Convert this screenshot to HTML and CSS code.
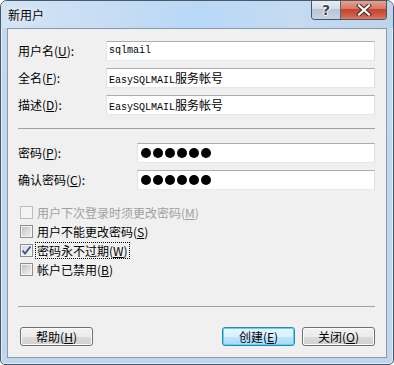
FILE: index.html
```html
<!DOCTYPE html>
<html>
<head>
<meta charset="utf-8">
<link rel="stylesheet" href="styles.css">
</head>
<body>
<div class="window">
  <div class="titlebar">
    <span class="title">新用户</span>
    <div class="caption-btns">
      <div class="cap cap-help"><span class="qmark">?</span></div>
      <div class="cap cap-close">
        <svg width="16" height="12" viewBox="0 0 16 12">
          <path d="M3 1.5 L13 10.5 M13 1.5 L3 10.5" stroke="#4a2a25" stroke-width="4.2" stroke-linecap="square" fill="none"/>
          <path d="M3 1.5 L13 10.5 M13 1.5 L3 10.5" stroke="#ffffff" stroke-width="2.2" stroke-linecap="square" fill="none"/>
        </svg>
      </div>
    </div>
  </div>
  <div class="client">
    <div class="fields">
      <div class="row">
        <label class="lbl">用户名(<u>U</u>):</label>
        <div class="edit">sqlmail</div>
      </div>
      <div class="row">
        <label class="lbl">全名(<u>F</u>):</label>
        <div class="edit">EasySQLMAIL<span class="cjk">服务帐号</span></div>
      </div>
      <div class="row">
        <label class="lbl">描述(<u>D</u>):</label>
        <div class="edit">EasySQLMAIL<span class="cjk">服务帐号</span></div>
      </div>
    </div>
    <div class="sep"></div>
    <div class="fields pw">
      <div class="row">
        <label class="lbl">密码(<u>P</u>):</label>
        <div class="edit dots"><span class="dot"></span><span class="dot"></span><span class="dot"></span><span class="dot"></span><span class="dot"></span><span class="dot"></span></div>
      </div>
      <div class="row">
        <label class="lbl">确认密码(<u>C</u>):</label>
        <div class="edit dots"><span class="dot"></span><span class="dot"></span><span class="dot"></span><span class="dot"></span><span class="dot"></span><span class="dot"></span></div>
      </div>
    </div>
    <div class="checks">
      <div class="check disabled"><span class="box"></span><span class="ctext">用户下次登录时须更改密码(<u>M</u>)</span></div>
      <div class="check"><span class="box"></span><span class="ctext">用户不能更改密码(<u>S</u>)</span></div>
      <div class="check"><span class="box checked"><svg width="11" height="11" viewBox="0 0 11 11"><path d="M1.5 5.5 L4 8.5 L9.5 1.5" stroke="#3b5494" stroke-width="1.8" fill="none"/></svg></span><span class="ctext focus">密码永不过期(<u>W</u>)</span></div>
      <div class="check"><span class="box"></span><span class="ctext">帐户已禁用(<u>B</u>)</span></div>
    </div>
    <div class="sep sep2"></div>
    <div class="buttons">
      <div class="btn">帮助(<u>H</u>)</div>
      <div class="spacer"></div>
      <div class="btn default">创建(<u>E</u>)</div>
      <div class="btn">关闭(<u>O</u>)</div>
    </div>
  </div>
</div>
</body>
</html>
```

FILE: styles.css
```css
html, body {
  margin: 0;
  padding: 0;
  background: #ffffff;
}
body {
  font-family: "Noto Sans CJK SC", "Liberation Sans", sans-serif;
  font-size: 12px;
  color: #000;
}
u {
  text-decoration: underline;
  text-underline-offset: 1px;
}
.window {
  box-sizing: border-box;
  width: 394px;
  height: 365px;
  border: 1px solid #4d5866;
  border-radius: 7px 7px 5px 5px;
  background: linear-gradient(to bottom, #c9def3 0px, #c3d9f0 30px, #bfd6ee 100%);
  box-shadow: inset 0 0 0 1px rgba(255,255,255,0.55);
  display: flex;
  flex-direction: column;
  overflow: hidden;
}
.titlebar {
  height: 27px;
  display: flex;
  align-items: flex-start;
  background: linear-gradient(to right, #d3e4f5 0%, #c4dcf4 30%, #b8d8f7 50%, #c4dbf1 75%, #bdd3ea 100%);
  flex-shrink: 0;
}
.title {
  margin-left: 7px;
  margin-top: 6px;
  line-height: 16px;
  font-size: 12px;
  color: #000;
  text-shadow: 0 0 6px rgba(255,255,255,0.9);
}
.caption-btns {
  margin-left: auto;
  margin-right: 6px;
  margin-top: -1px;
  display: flex;
  height: 20px;
  border: 1px solid #4a5462;
  border-top: none;
  border-radius: 0 0 4px 4px;
  overflow: hidden;
  box-sizing: border-box;
}
.cap {
  height: 19px;
  display: flex;
  align-items: center;
  justify-content: center;
}
.cap-help {
  width: 28px;
  background: linear-gradient(to bottom, #e9eff6 0%, #d3dde9 45%, #b7c5d6 50%, #c6d3e2 100%);
  border-right: 1px solid #5a6572;
}
.qmark {
  font-family: "DejaVu Sans", sans-serif;
  font-weight: bold;
  font-size: 14px;
  line-height: 14px;
  color: #3d4654;
  text-shadow: 1px 0 0 #fff, -1px 0 0 #fff, 0 1px 0 #fff, 0 -1px 0 #fff;
}
.cap-close {
  width: 45px;
  background: linear-gradient(to bottom, #e7a797 0%, #d77a66 45%, #c6432f 50%, #d1604a 85%, #e0806a 100%);
}
.client {
  box-sizing: border-box;
  margin: 0 6px 6px 6px;
  height: 330px;
  border: 1px solid #8799ad;
  background: #f0f0f0;
  padding: 12px 11px 0 10px;
  display: flex;
  flex-direction: column;
}
.fields {
  display: flex;
  flex-direction: column;
  gap: 7px;
}
.row {
  display: flex;
  align-items: center;
  height: 20px;
}
.lbl {
  width: 88px;
  flex-shrink: 0;
  line-height: 14px;
}
.pw .lbl {
  width: 119px;
}
.edit {
  box-sizing: border-box;
  flex: 1;
  height: 20px;
  background: #ffffff;
  border: 1px solid;
  border-color: #abadb3 #dbdfe6 #e3e9ef #e2e3ea;
  padding-left: 2px;
  font-family: "Liberation Mono", "Noto Sans CJK SC", monospace;
  font-size: 10px;
  line-height: 18px;
  white-space: nowrap;
  overflow: hidden;
}
.cjk {
  font-family: "Noto Sans CJK SC", sans-serif;
  font-size: 12px;
}
.dots {
  display: flex;
  align-items: center;
  gap: 2px;
  padding-left: 3px;
}
.dot {
  width: 10px;
  height: 10px;
  border-radius: 50%;
  background: #000;
}
.sep {
  height: 1px;
  background: #a0a0a0;
  margin-top: 13px;
  flex-shrink: 0;
}
.pw {
  margin-top: 14px;
}
.checks {
  margin-top: 13px;
  display: flex;
  flex-direction: column;
  padding-left: 2px;
}
.check {
  height: 19px;
  display: flex;
  align-items: center;
}
.box {
  box-sizing: border-box;
  width: 13px;
  height: 13px;
  border: 1px solid #8e8f8f;
  background: linear-gradient(135deg, #b5b9bf 0%, #d9dbde 50%, #f2f2f2 100%);
  box-shadow: inset 0 0 0 1px #f4f4f4;
  flex-shrink: 0;
  display: flex;
  align-items: center;
  justify-content: center;
}
.box.checked {
  background: linear-gradient(135deg, #d0d4d9 0%, #ebebeb 60%, #f6f6f6 100%);
}
.disabled .box {
  border-color: #bcbcbc;
  background: #f4f4f4;
  box-shadow: none;
}
.disabled .ctext {
  color: #a0a0a0;
}
.ctext {
  margin-left: 2px;
  line-height: 15px;
  padding: 0 1px;
  border: 1px solid transparent;
}
.ctext.focus {
  border: 1px dotted #000;
}
.sep2 {
  margin-top: 27px;
}
.buttons {
  margin-top: 20px;
  display: flex;
  gap: 7px;
  padding-left: 2px;
}
.spacer {
  flex: 1;
}
.btn {
  box-sizing: border-box;
  width: 73px;
  height: 19px;
  border: 1px solid #707070;
  border-radius: 3px;
  background: linear-gradient(to bottom, #f2f2f2 0%, #ebebeb 50%, #dddddd 51%, #cfcfcf 100%);
  box-shadow: inset 0 0 0 1px #fcfcfc;
  display: flex;
  align-items: center;
  justify-content: center;
  line-height: 15px;
}
.btn.default {
  border-color: #3c7fb1;
  background: linear-gradient(to bottom, #eaf6fd 0%, #d9f0fc 50%, #bee6fd 51%, #a7d9f5 100%);
  box-shadow: inset 0 0 0 1px #48dcfb;
}
```
